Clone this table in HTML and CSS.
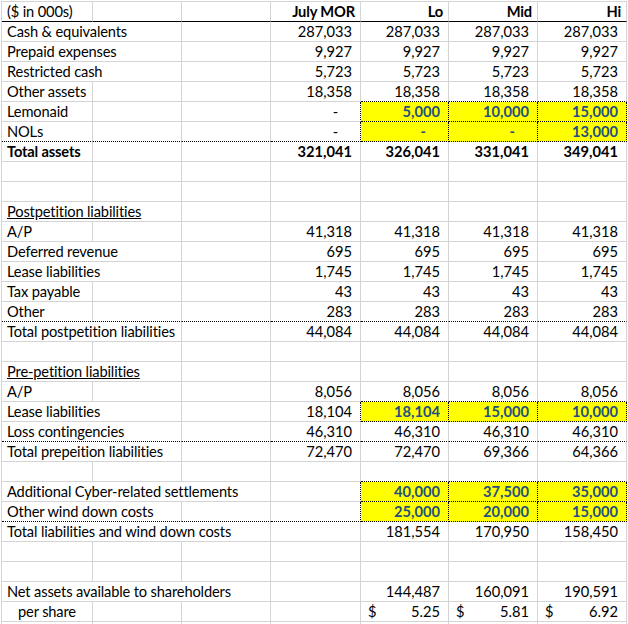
FILE: index.html
```html
<!DOCTYPE html>
<html>
<head>
<meta charset="utf-8">
<link rel="stylesheet" href="styles.css">
</head>
<body>
<div class="sheet">
  <div class="r"><div class="c hb">($ in 000s)</div><div class="c hb"></div><div class="c hb"></div><div class="c hb h">July MOR</div><div class="c hb h">Lo</div><div class="c hb h">Mid</div><div class="c hb h">Hi</div></div>
  <div class="r"><div class="c s2">Cash &amp; equivalents</div><div class="c"></div><div class="c n">287,033</div><div class="c n">287,033</div><div class="c n">287,033</div><div class="c n">287,033</div></div>
  <div class="r"><div class="c s2">Prepaid expenses</div><div class="c"></div><div class="c n">9,927</div><div class="c n">9,927</div><div class="c n">9,927</div><div class="c n">9,927</div></div>
  <div class="r"><div class="c s2">Restricted cash</div><div class="c"></div><div class="c n">5,723</div><div class="c n">5,723</div><div class="c n">5,723</div><div class="c n">5,723</div></div>
  <div class="r"><div class="c">Other assets</div><div class="c"></div><div class="c"></div><div class="c n">18,358</div><div class="c n db">18,358</div><div class="c n db">18,358</div><div class="c n db">18,358</div></div>
  <div class="r"><div class="c">Lemonaid</div><div class="c"></div><div class="c"></div><div class="c z dr">-</div><div class="c y">5,000</div><div class="c y">10,000</div><div class="c y">15,000</div></div>
  <div class="r"><div class="c db">NOLs</div><div class="c db"></div><div class="c db"></div><div class="c z dr db">-</div><div class="c y yz">-</div><div class="c y yz">-</div><div class="c y">13,000</div></div>
  <div class="r b"><div class="c">Total assets</div><div class="c"></div><div class="c"></div><div class="c n">321,041</div><div class="c n">326,041</div><div class="c n">331,041</div><div class="c n">349,041</div></div>
  <div class="r"><div class="c"></div><div class="c"></div><div class="c"></div><div class="c"></div><div class="c"></div><div class="c"></div><div class="c"></div></div>
  <div class="r"><div class="c"></div><div class="c"></div><div class="c"></div><div class="c"></div><div class="c"></div><div class="c"></div><div class="c"></div></div>
  <div class="r"><div class="c s2"><span class="u">Postpetition liabilities</span></div><div class="c"></div><div class="c"></div><div class="c"></div><div class="c"></div><div class="c"></div></div>
  <div class="r"><div class="c">A/P</div><div class="c"></div><div class="c"></div><div class="c n">41,318</div><div class="c n">41,318</div><div class="c n">41,318</div><div class="c n">41,318</div></div>
  <div class="r"><div class="c s2">Deferred revenue</div><div class="c"></div><div class="c n">695</div><div class="c n">695</div><div class="c n">695</div><div class="c n">695</div></div>
  <div class="r"><div class="c s2">Lease liabilities</div><div class="c"></div><div class="c n">1,745</div><div class="c n">1,745</div><div class="c n">1,745</div><div class="c n">1,745</div></div>
  <div class="r"><div class="c">Tax payable</div><div class="c"></div><div class="c"></div><div class="c n">43</div><div class="c n">43</div><div class="c n">43</div><div class="c n">43</div></div>
  <div class="r"><div class="c db">Other</div><div class="c db"></div><div class="c db"></div><div class="c n db">283</div><div class="c n db">283</div><div class="c n db">283</div><div class="c n db">283</div></div>
  <div class="r"><div class="c s2">Total postpetition liabilities</div><div class="c"></div><div class="c n">44,084</div><div class="c n">44,084</div><div class="c n">44,084</div><div class="c n">44,084</div></div>
  <div class="r"><div class="c"></div><div class="c"></div><div class="c"></div><div class="c"></div><div class="c"></div><div class="c"></div><div class="c"></div></div>
  <div class="r"><div class="c s2"><span class="u">Pre-petition liabilities</span></div><div class="c"></div><div class="c"></div><div class="c"></div><div class="c"></div><div class="c"></div></div>
  <div class="r"><div class="c">A/P</div><div class="c"></div><div class="c"></div><div class="c n">8,056</div><div class="c n db">8,056</div><div class="c n db">8,056</div><div class="c n db">8,056</div></div>
  <div class="r"><div class="c s2">Lease liabilities</div><div class="c"></div><div class="c n dr">18,104</div><div class="c y">18,104</div><div class="c y">15,000</div><div class="c y">10,000</div></div>
  <div class="r"><div class="c s2 db">Loss contingencies</div><div class="c db"></div><div class="c n db">46,310</div><div class="c n db">46,310</div><div class="c n db">46,310</div><div class="c n db">46,310</div></div>
  <div class="r"><div class="c s2">Total prepeition liabilities</div><div class="c"></div><div class="c n">72,470</div><div class="c n">72,470</div><div class="c n">69,366</div><div class="c n">64,366</div></div>
  <div class="r"><div class="c"></div><div class="c"></div><div class="c"></div><div class="c"></div><div class="c db"></div><div class="c db"></div><div class="c db"></div></div>
  <div class="r"><div class="c s3">Additional Cyber-related settlements</div><div class="c dr"></div><div class="c y">40,000</div><div class="c y">37,500</div><div class="c y">35,000</div></div>
  <div class="r"><div class="c s2 db">Other wind down costs</div><div class="c db"></div><div class="c dr db"></div><div class="c y">25,000</div><div class="c y">20,000</div><div class="c y">15,000</div></div>
  <div class="r"><div class="c s3">Total liabilities and wind down costs</div><div class="c"></div><div class="c n">181,554</div><div class="c n">170,950</div><div class="c n">158,450</div></div>
  <div class="r"><div class="c"></div><div class="c"></div><div class="c"></div><div class="c"></div><div class="c"></div><div class="c"></div><div class="c"></div></div>
  <div class="r"><div class="c"></div><div class="c"></div><div class="c"></div><div class="c"></div><div class="c"></div><div class="c"></div><div class="c"></div></div>
  <div class="r"><div class="c s3">Net assets available to shareholders</div><div class="c"></div><div class="c n">144,487</div><div class="c n">160,091</div><div class="c n">190,591</div></div>
  <div class="r"><div class="c ps">per share</div><div class="c"></div><div class="c"></div><div class="c"></div><div class="c cur"><span>$</span><span>5.25</span></div><div class="c cur"><span>$</span><span>5.81</span></div><div class="c cur"><span>$</span><span>6.92</span></div></div>
  <div class="r"><div class="c"></div><div class="c"></div><div class="c"></div><div class="c"></div><div class="c"></div><div class="c"></div><div class="c"></div></div>
</div>
</body>
</html>
```

FILE: styles.css
```css
html, body {
  margin: 0;
  padding: 0;
  background: #ffffff;
}

.sheet {
  margin: 1px 0 0 1px;
  border-left: 1px solid #d4d4d4;
  border-top: 1px solid #d4d4d4;
  width: 625px;
  font-family: Lato, "Open Sans", sans-serif;
  font-size: 14.67px;
  color: #000000;
}

.r {
  display: grid;
  grid-template-columns: 91px 89px 89px 90px 88px 89px 89px;
}

.c {
  box-sizing: border-box;
  height: 20px;
  line-height: 19px;
  border-right: 1px solid #d4d4d4;
  border-bottom: 1px solid #d4d4d4;
  padding: 0 0 0 5px;
  white-space: nowrap;
  letter-spacing: -0.15px;
}

.s2 { grid-column: span 2; }
.s3 { grid-column: span 3; }

.hb { border-bottom: 1px solid #000000; }

.h {
  font-weight: bold;
  text-align: right;
  padding: 0 5px 0 0;
}

.n {
  text-align: right;
  padding: 0 8px 0 0;
  letter-spacing: 0;
}

.z {
  text-align: right;
  padding: 0 22px 0 0;
}

.b .c { font-weight: bold; }

.db { border-bottom: 1px dotted #000000; }
.dr { border-right: 1px dotted #000000; }

.y {
  background: #ffff00;
  color: #1f5080;
  font-weight: bold;
  text-align: right;
  padding: 0 8px 0 0;
  letter-spacing: 0;
  border-right: 1px dotted #000000;
  border-bottom: 1px dotted #000000;
}

.yz { padding-right: 22px; }

.u { text-decoration: underline; }

.ps { padding-left: 16px; }

.cur {
  display: flex;
  justify-content: space-between;
  padding: 0 8px 0 7px;
  letter-spacing: 0;
}
```
